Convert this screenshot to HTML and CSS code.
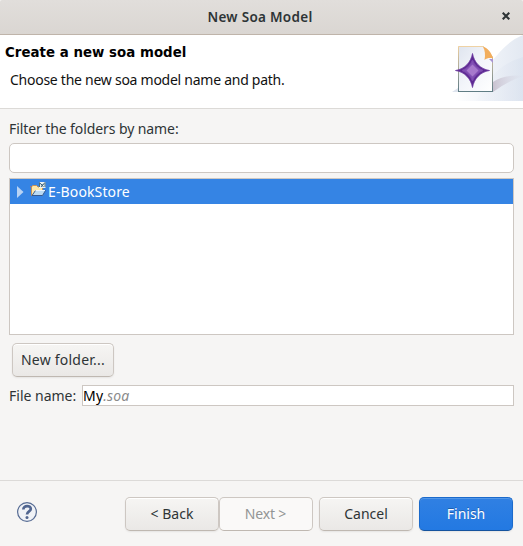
FILE: index.html
```html
<!DOCTYPE html>
<html lang="en">
<head>
<meta charset="utf-8">
<title>New Soa Model</title>
<link rel="stylesheet" href="styles.css">
</head>
<body>
<div class="dialog">
  <header class="titlebar">
    <span class="title">New Soa Model</span>
    <svg class="close" width="8" height="8" viewBox="0 0 8 8"><path d="M.7.7 7.3 7.3M7.3.7.7 7.3" stroke="#2e3436" stroke-width="2.1"/></svg>
  </header>
  <section class="banner">
    <div class="banner-text">
      <h1>Create a new soa model</h1>
      <p class="desc">Choose the new soa model name and path.</p>
    </div>
    <svg class="art" width="75" height="66" viewBox="448 35 75 66">
      <defs>
        <linearGradient id="sky" x1="0" x2="1"><stop offset="0" stop-color="#fff"/><stop offset=".45" stop-color="#f1f4f9"/><stop offset="1" stop-color="#e3e9f2"/></linearGradient>
        <linearGradient id="sky2" x1="0" x2="1"><stop offset="0" stop-color="#e9edf5" stop-opacity=".2"/><stop offset="1" stop-color="#d9e1ee"/></linearGradient>
        <linearGradient id="paper" x1="0" x2="1" y2="1"><stop offset="0" stop-color="#dfe5ef"/><stop offset=".5" stop-color="#f3f5fa"/><stop offset="1" stop-color="#fff"/></linearGradient>
        <linearGradient id="edge" x2="0" y2="1"><stop offset="0" stop-color="#eed0a0"/><stop offset=".5" stop-color="#a9a899"/><stop offset="1" stop-color="#5d7b85"/></linearGradient>
        <linearGradient id="shade" x1="0" x2="1"><stop offset="0" stop-color="#c9c2d0"/><stop offset="1" stop-color="#dfe3ee" stop-opacity=".3"/></linearGradient>
      </defs>
      <path d="M523 35C505 42 497 57 485 68 475 77 462 87 455 101H523Z" fill="url(#sky)"/>
      <path d="M523 57C507 62 497 69 487 83L476 101H523Z" fill="url(#sky2)" opacity=".6"/>
      <path d="M493 92V82Q505 74 523 76Q506 82 493 92" fill="url(#shade)"/>
      <path d="M452 92 458 88V92Z" fill="#dde3ed"/>
      <path d="M458.500 46.500H483.500L492.500 57V91.500H458.500Z" fill="url(#paper)" stroke="url(#edge)"/>
      <path d="M458.500 46.500H484" stroke="#efd2a4"/>
      <path d="M458 91.500H493" stroke="#607d84"/>
      <path d="M489 59H493V63Z" fill="#a996d2"/>
      <path d="M483 47C487 47 492 53 493 58.500C490 57.500 487 58 484.500 60C485.500 55 485 50 483 47" fill="#f2ad5c"/>
      <path d="M472.500 53.500C474 62 480 69 489.500 70.500C480 72 474 79 472.500 87.500C471 79 465 72 455.500 70.500C465 69 471 62 472.500 53.500Z" fill="#5d2a92" stroke="#6b369f" stroke-width=".8"/>
      <path d="M472.500 60C474.500 65 478 68.500 483 70.500C478 72.500 474.500 76 472.500 81C470.500 76 467 72.500 462 70.500C467 68.500 470.500 65 472.500 60Z" fill="#8250b5" stroke="#7b48ad"/>
      <path d="M472.500 64.500 478.500 70.500 472.500 76.500 466.500 70.500Z" fill="#a779cc"/>
    </svg>
  </section>
  <main class="content">
    <label class="filter-label" for="filter">Filter the folders by name:</label>
    <input class="filter" id="filter" type="text">
    <div class="tree">
      <div class="row">
        <svg class="arrow" width="7" height="12" viewBox="0 0 7 12"><path d="M0 0 6.500 6 0 12Z" fill="#b8d3f4"/></svg>
        <svg class="folder" width="16" height="16" viewBox="0 0 16 16">
          <path d="M1.500 13.500V4.500L3 3.500H6.500L8 5H12.500V13.500Z" fill="#ffe8a8" stroke="#c69255"/>
          <path d="M0 4.500H2" stroke="#a77b70"/>
          <path d="M2 13.500 5.500 8.500H15.500L12.500 13.500Z" fill="#b9daf3" stroke="#365a91"/>
          <path d="M5.500 8.500H15" stroke="#e9f5ff"/>
          <path d="M9 0H15.500V6H9Z" fill="#edf4f5"/>
          <path d="M9.500 5V.5L12.200 3.400 15 .5V5M11 2 13.500 5M13.500 2 11 5" fill="none" stroke="#385d73" stroke-width=".9"/>
        </svg>
        <span class="row-text">E-BookStore</span>
      </div>
    </div>
    <button class="btn new-folder">New folder...</button>
    <div class="file">
      <span class="file-label">File name:</span>
      <div class="file-input">My<i>.soa</i></div>
    </div>
  </main>
  <footer class="footer">
    <svg class="help" width="22" height="22" viewBox="0 0 22 22">
      <circle cx="11" cy="11" r="9.400" fill="#f0f2f6" stroke="#566b93" stroke-width="1.200"/>
      <path d="M7.400 8.500C7.200 4 14.800 4 14.800 7.900C14.800 10.400 11 10.400 11 13.500" fill="none" stroke="#50658f" stroke-width="2.700"/>
      <circle cx="11" cy="16.600" r="1.500" fill="#50658f"/>
    </svg>
    <div class="actions">
      <div class="pair">
        <button class="btn back">&lt; Back</button>
        <button class="btn next" disabled>Next &gt;</button>
      </div>
      <button class="btn cancel">Cancel</button>
      <button class="btn finish">Finish</button>
    </div>
  </footer>
</div>
</body>
</html>
```
FILE: styles.css
```css
* { box-sizing: border-box; }
body { margin: 0; font: 14px/20px "Noto Sans", sans-serif; color: #2e3436; background: #f6f5f4; }
.dialog { width: 523px; height: 546px; display: flex; flex-direction: column; overflow: hidden; background: #f6f5f4; white-space: nowrap; }
.titlebar { flex: none; height: 35px; display: grid; grid-template-columns: 1fr auto 1fr; align-items: center; padding: 0 13px; border-bottom: 1px solid #bfb4aa; background: linear-gradient(#e1dedb, #dad6d2); border-radius: 2px 2px 0 0; }
.title { grid-column: 2; font-weight: 600; font-size: 13.5px; letter-spacing: .3px; padding: 0 3px 1px 0; }
.close { justify-self: end; margin-bottom: 2px; }
.banner { flex: none; height: 74px; display: flex; justify-content: space-between; background: #fff; border-bottom: 1px solid #dcdad7; color: #000; }
.banner-text { padding: 8px 0 0 5px; }
h1 { margin: 0; font: bold 13.33px/20px "DejaVu Sans", sans-serif; letter-spacing: .04px; }
.desc { margin: 7px 0 0 5px; color: #111; letter-spacing: -.26px; }
.art { flex: none; }
.content { flex: 1; padding: 10px 9px 0; display: flex; flex-direction: column; align-items: stretch; }
.filter-label { height: 20px; letter-spacing: -.09px; }
.filter { height: 30px; margin: 4px 0 5px; padding: 0 8px; border: 1px solid #cdc7c2; border-radius: 5px; background: #fff; font: inherit; outline: 0; }
.tree { height: 157px; border: 1px solid #cdc7c2; background: #fff; }
.row { height: 25px; display: flex; align-items: center; padding-left: 7px; background: #3584e4; color: #fff; }
.row-text { letter-spacing: .13px; }
.folder { margin: 0 2px 3px 6px; }
.btn { display: block; width: 94px; height: 34px; margin: 0; padding: 0; border: 1px solid #cdc7c2; border-bottom-color: #bfb8b1; border-radius: 5px; background: linear-gradient(#f6f5f3, #eae8e6); box-shadow: inset 0 1px #fff, 0 1px 2px rgba(0,0,0,.07); color: #2e3436; font: inherit; }
.new-folder { width: 102px; margin: 8px 0 0 3px; letter-spacing: .23px; }
.file { display: flex; align-items: center; margin-top: 8px; height: 21px; }
.file-label { width: 73px; }
.file-input { flex: 1; height: 21px; line-height: 19px; border: 1px solid #cdc7c2; background: #fff; color: #000; letter-spacing: .2px; }
.file-input i { color: #8b8b8b; }
.footer { flex: none; height: 66px; display: flex; align-items: flex-start; justify-content: space-between; padding: 16px 10px 0 16px; border-top: 1px solid #dcdad8; }
.help { margin-top: 4px; }
.actions { display: flex; gap: 6px; }
.pair { display: flex; }
.next { background: #faf9f8; color: #929595; box-shadow: none; letter-spacing: -.15px; padding-right: 1px; }
.finish { border-color: #1b6acb; border-bottom-color: #15539e; background: linear-gradient(#3080e3, #2379e2); box-shadow: inset 0 1px #5397e8, 0 1px 2px rgba(0,0,0,.07); color: #fff; text-shadow: 0 -1px rgba(0,0,0,.25); }
```
